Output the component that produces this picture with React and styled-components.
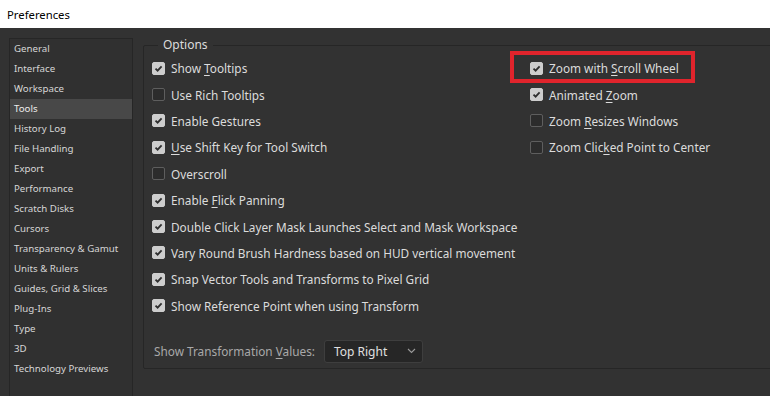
import React from "react";
import styled, { createGlobalStyle } from "styled-components";

const GlobalStyle = createGlobalStyle`
  html, body {
    margin: 0;
    padding: 0;
    background: #323232;
    overflow: hidden;
  }
  *, *::before, *::after { box-sizing: border-box; }
`;

const sections = [
  "General",
  "Interface",
  "Workspace",
  "Tools",
  "History Log",
  "File Handling",
  "Export",
  "Performance",
  "Scratch Disks",
  "Cursors",
  "Transparency & Gamut",
  "Units & Rulers",
  "Guides, Grid & Slices",
  "Plug-Ins",
  "Type",
  "3D",
  "Technology Previews"
];

// label parts: [before, mnemonic, after]
const leftOptions = [
  { label: ["Show ", "T", "ooltips"], checked: true },
  { label: ["Use Rich Tooltips"], checked: false },
  { label: ["Enable Gestures"], checked: true },
  { label: ["", "U", "se Shift Key for Tool Switch"], checked: true },
  { label: ["Overscroll"], checked: false },
  { label: ["Enable ", "F", "lick Panning"], checked: true },
  { label: ["Double Click Layer Mask Launches Select and Mask Workspace"], checked: true },
  { label: ["Vary Round Brush Hardness based on HUD vertical movement"], checked: true },
  { label: ["Snap Vector Tools and Transforms to Pixel Grid"], checked: true },
  { label: ["Show Reference Point when using Transform"], checked: true }
];

const rightOptions = [
  { label: ["Zoom with ", "S", "croll Wheel"], checked: true, marked: true },
  { label: ["Animated ", "Z", "oom"], checked: true },
  { label: ["Zoom ", "R", "esizes Windows"], checked: false },
  { label: ["Zoom Clic", "k", "ed Point to Center"], checked: false }
];

const Label = ({ parts }) => (
  <span>
    {parts[0]}
    {parts[1] && <u>{parts[1]}</u>}
    {parts[2]}
  </span>
);

const Check = ({ checked }) => (
  <Box checked={checked}>
    {checked && (
      <svg width="9" height="9" viewBox="0 0 9 9">
        <path d="M1.5 4.6 L3.6 6.7 L7.6 2.3" fill="none" stroke="#2e2e2e" strokeWidth="1.8" />
      </svg>
    )}
  </Box>
);

export default function App() {
  return (
    <>
      <GlobalStyle />
      <Window>
        <TitleBar>Preferences</TitleBar>
        <Body>
          <Sidebar>
            {sections.map(s => (
              <NavItem key={s} active={s === "Tools"}>
                {s}
              </NavItem>
            ))}
          </Sidebar>
          <Main>
            <Group>
              <Legend>Options</Legend>
              <Columns>
                <Column>
                  {leftOptions.map((o, i) => (
                    <Row key={i}>
                      <Check checked={o.checked} />
                      <Label parts={o.label} />
                    </Row>
                  ))}
                </Column>
                <Column right>
                  {rightOptions.map((o, i) => (
                    <Row key={i} marked={o.marked}>
                      <Check checked={o.checked} />
                      <Label parts={o.label} />
                    </Row>
                  ))}
                </Column>
              </Columns>
              <SelectRow>
                <SelectLabel>
                  Show Transformation <u>V</u>alues:
                </SelectLabel>
                <Select>
                  Top Right
                  <svg width="9" height="6" viewBox="0 0 9 6">
                    <path d="M1 1 L4.5 4.5 L8 1" fill="none" stroke="#9a9a9a" strokeWidth="1.1" />
                  </svg>
                </Select>
              </SelectRow>
            </Group>
          </Main>
        </Body>
      </Window>
    </>
  );
}

const Window = styled.div`
  width: 770px;
  height: 396px;
  overflow: hidden;
  display: flex;
  flex-direction: column;
  background: #323232;
  font-family: "Noto Sans", "Open Sans", sans-serif;
`;

const TitleBar = styled.div`
  height: 28px;
  flex: none;
  background: #ffffff;
  color: #000;
  font-size: 11.3px;
  padding-left: 7px;
  padding-top: 1px;
  display: flex;
  align-items: center;
`;

const Body = styled.div`
  flex: 1;
  display: flex;
  padding: 10px 0 0 9px;
  gap: 10px;
  min-height: 0;
`;

const Sidebar = styled.div`
  width: 124px;
  flex: none;
  height: 400px;
  border: 1px solid #262626;
  border-bottom: none;
  background: #303030;
`;

const NavItem = styled.div`
  height: 20px;
  line-height: 20px;
  padding-left: 4px;
  font-size: 9.7px;
  color: ${p => (p.active ? "#ececec" : "#d6d6d6")};
  background: ${p => (p.active ? "#484848" : "transparent")};
  white-space: nowrap;
`;

const Main = styled.div`
  flex: 1;
`;

const Group = styled.fieldset`
  margin: 0;
  width: 700px;
  height: 331px;
  border: 1px solid #262626;
  border-radius: 2px;
  padding: 3px 0 0 8px;
  position: relative;
`;

const Legend = styled.legend`
  margin-left: 6px;
  padding: 0 5px;
  font-size: 12px;
  color: #dcdcdc;
  line-height: 14px;
`;

const Columns = styled.div`
  display: flex;
`;

const Column = styled.div`
  width: ${p => (p.right ? "auto" : "378px")};
  display: flex;
  flex-direction: column;
`;

const Row = styled.div`
  position: relative;
  height: 26.4px;
  display: flex;
  align-items: center;
  gap: 6px;
  font-size: 11.8px;
  color: #dcdcdc;
  white-space: nowrap;

  u {
    text-underline-offset: 2px;
  }

  ${p =>
    p.marked &&
    `
    &::after {
      content: "";
      position: absolute;
      left: -20px;
      top: -4px;
      width: 185px;
      height: 32px;
      border: 4px solid #e0242c;
      pointer-events: none;
    }
  `}
`;

const Box = styled.span`
  width: 13px;
  height: 13px;
  flex: none;
  border-radius: 2px;
  display: flex;
  align-items: center;
  justify-content: center;
  background: ${p => (p.checked ? "#cdcdcd" : "#2c2c2c")};
  border: 1px solid ${p => (p.checked ? "#cdcdcd" : "#5e5e5e")};
`;

const SelectRow = styled.div`
  display: flex;
  align-items: center;
  gap: 9px;
  margin-top: 21px;
  padding-left: 2px;
`;

const SelectLabel = styled.span`
  font-size: 11.8px;
  color: #a9a9a9;
  white-space: nowrap;

  u {
    text-underline-offset: 2px;
  }
`;

const Select = styled.div`
  width: 99px;
  height: 23px;
  border: 1px solid #3e3e3e;
  border-radius: 3px;
  background: #262626;
  display: flex;
  align-items: center;
  justify-content: space-between;
  padding: 0 6px 0 9px;
  font-size: 12px;
  color: #e0e0e0;
`;
